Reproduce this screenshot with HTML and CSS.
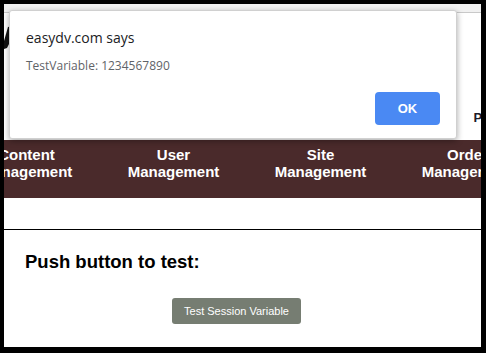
FILE: index.html
```html
<!DOCTYPE html>
<html lang="en">
<head>
    <meta charset="UTF-8">
    <meta name="viewport" content="width=device-width, initial-scale=1.0">
    <title>Session Test</title>
    <link rel="stylesheet" href="styles.css">
</head>
<body>
    <div class="frame">
        <div class="topbar"></div>

        <!-- header with logo and account links -->
        <div class="header">
            <svg class="logo" width="12" height="40" viewBox="0 0 12 40">
                <polygon points="4,12 12,10 12,15 3,33 0,34 0,26" fill="#111"/>
            </svg>
            <div class="account">Profile</div>
        </div>

        <!-- main menu -->
        <div class="nav">
            <div class="nav-row">
                <div class="nav-item">Content<br>Management</div>
                <div class="nav-item">User<br>Management</div>
                <div class="nav-item">Site<br>Management</div>
                <div class="nav-item">Order<br>Management</div>
            </div>
        </div>

        <div class="spacer"></div>
        <hr class="rule">

        <div class="content">
            <h3>Push button to test:</h3>
            <div class="button-row">
                <button type="button" id="test-btn">Test Session Variable</button>
            </div>
        </div>

        <!-- browser alert -->
        <div class="alert">
            <div class="alert-title">easydv.com says</div>
            <div class="alert-text">TestVariable: 1234567890</div>
            <div class="alert-actions">
                <button type="button" class="ok-btn">OK</button>
            </div>
        </div>
    </div>
</body>
</html>
```

FILE: styles.css
```css
html, body {
    margin: 0;
    background: #000;
}
.frame {
    position: relative;
    width: 477px;
    height: 343px;
    border-style: solid;
    border-color: #000;
    border-width: 4px 5px 6px 4px;
    background: #fff;
    overflow: hidden;
    font-family: "Liberation Sans", Arial, sans-serif;
}
.topbar {
    height: 8px;
    background: #f1f1f1;
    border-bottom: 1px solid #c9c9c9;
}
.header {
    height: 112px;
    padding-bottom: 15px;
    display: flex;
    align-items: flex-end;
    justify-content: space-between;
}
.logo {
    align-self: flex-start;
    margin-top: 2px;
}
.account {
    font-size: 13px;
    font-weight: bold;
    color: #1c1c2a;
    margin-right: -33px;
    line-height: 15px;
}
.nav {
    height: 58px;
    background: #4a2a2b;
    overflow: hidden;
}
.nav-row {
    display: flex;
    margin-left: -51px;
    padding-top: 6px;
}
.nav-item {
    flex: 0 0 147px;
    text-align: center;
    color: #fff;
    font-weight: bold;
    font-size: 15px;
    line-height: 17px;
}
.spacer {
    height: 31px;
}
.rule {
    margin: 0;
    border: none;
    border-top: 1px solid #000;
}
.content {
    padding: 21px 33px 0 21px;
}
h3 {
    margin: 0 0 26px 0;
    font-size: 18.5px;
    line-height: 21px;
    color: #000;
}
.button-row {
    display: flex;
    justify-content: center;
}
#test-btn {
    width: 129px;
    height: 26px;
    border: none;
    border-radius: 3px;
    background: #767d72;
    color: #fff;
    font-family: "Liberation Sans", Arial, sans-serif;
    font-size: 11px;
    cursor: pointer;
}
.alert {
    position: absolute;
    left: 5px;
    top: 6px;
    width: 448px;
    height: 129px;
    box-sizing: border-box;
    padding: 16px 16px 0 16px;
    background: #fff;
    border-radius: 3px;
    border: 1px solid #d0d0d0;
    box-shadow: 0 2px 6px rgba(0, 0, 0, 0.35);
    font-family: "Open Sans", "Noto Sans", sans-serif;
}
.alert-title {
    font-size: 14px;
    line-height: 22px;
    color: #202124;
}
.alert-text {
    margin-top: 9px;
    font-size: 12px;
    line-height: 16px;
    color: #5f6368;
}
.alert-actions {
    display: flex;
    justify-content: flex-end;
    margin-top: 18px;
}
.ok-btn {
    width: 65px;
    height: 33px;
    border: none;
    border-radius: 4px;
    background: #4a89f3;
    color: #fff;
    font-family: "Liberation Sans", Arial, sans-serif;
    font-weight: bold;
    font-size: 13px;
}
```
